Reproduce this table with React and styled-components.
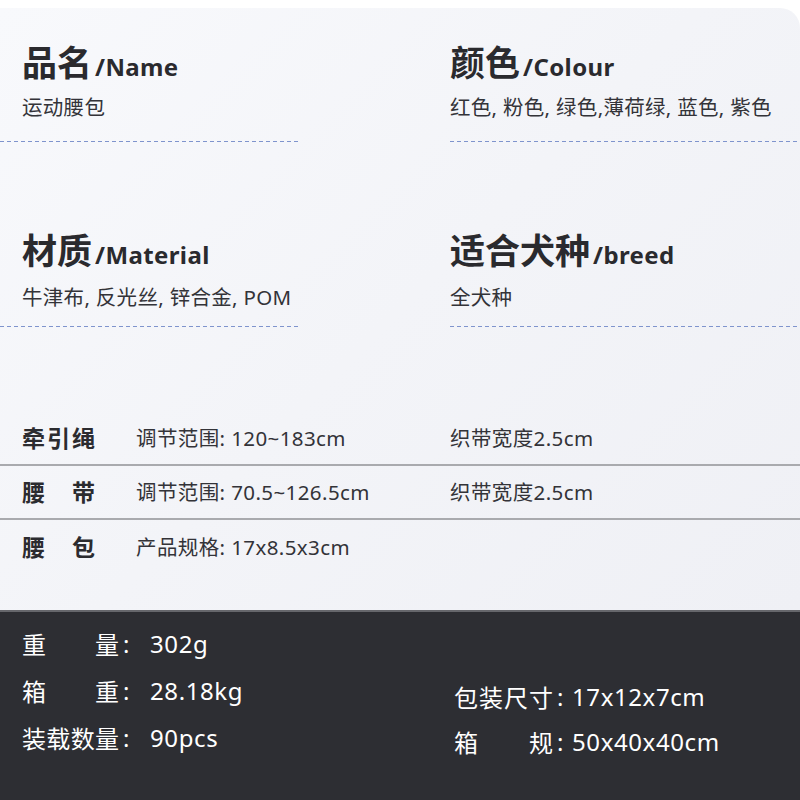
import React from "react";
import styled, { createGlobalStyle } from "styled-components";

const GlobalStyle = createGlobalStyle`
  html, body {
    margin: 0;
    padding: 0;
    background: #ffffff;
  }
  body {
    font-family: "Noto Sans", "Noto Sans CJK SC", sans-serif;
    color: #2b2b2f;
  }
`;

const Page = styled.div`
  width: 800px;
  height: 800px;
  overflow: hidden;
  display: flex;
  flex-direction: column;
  padding-top: 8px;
  box-sizing: border-box;
`;

const Panel = styled.section`
  flex: 1;
  display: flex;
  flex-direction: column;
  background: linear-gradient(135deg, #f8f9fc 0%, #f3f4f8 50%, #eff0f5 100%);
  border-top-right-radius: 20px;
`;

const InfoGrid = styled.div`
  display: grid;
  grid-template-columns: 450px 350px;
  padding-top: 35px;
  row-gap: 89px;
`;

const InfoCell = styled.div`
  display: flex;
  flex-direction: column;
`;

const Heading = styled.h2`
  margin: 0;
  padding-left: ${(p) => p.$indent}px;
  line-height: 40px;
  font-size: 35px;
  font-weight: 700;
  color: #2a2a2e;
  white-space: nowrap;

  small {
    font-size: 24px;
    font-weight: 700;
    margin-left: 3px;
    letter-spacing: 0.4px;
  }
`;

const SubText = styled.p`
  margin: ${(p) => p.$gap}px 0 0;
  padding-left: ${(p) => p.$indent}px;
  line-height: 28px;
  font-size: 20.5px;
  letter-spacing: 0.3px;
  color: #333338;
  white-space: nowrap;
`;

const Dashed = styled.div`
  margin-top: ${(p) => p.$gap}px;
  width: ${(p) => p.$width}px;
  height: 1px;
  background-image: repeating-linear-gradient(
    to right,
    #7f94cd 0 4px,
    transparent 4px 7px
  );
`;

const Table = styled.div`
  margin-top: 85px;
  display: flex;
  flex-direction: column;
`;

const Row = styled.div`
  display: grid;
  grid-template-columns: 114px 314px 1fr;
  align-items: center;
  height: 54px;
  padding-left: 22px;
  padding-bottom: 2px;
  box-sizing: border-box;
  border-bottom: ${(p) => (p.$last ? "none" : "2px solid #a9aaae")};
`;

const Spread = styled.span`
  display: flex;
  justify-content: space-between;
  width: ${(p) => p.$width}px;
  font-size: ${(p) => p.$size}px;
  font-weight: ${(p) => p.$weight || 400};
`;

const Cell = styled.span`
  font-size: 20.5px;
  letter-spacing: 0.4px;
  color: #333338;
  white-space: nowrap;
`;

const Footer = styled.footer`
  height: 190px;
  background: #2d2e33;
  border-top: 2px solid #66676c;
  box-sizing: border-box;
  display: grid;
  grid-template-columns: 454px 1fr;
  color: #ffffff;
`;

const FooterCol = styled.div`
  display: flex;
  flex-direction: column;
  padding-top: ${(p) => p.$top}px;
  padding-left: ${(p) => p.$left}px;
`;

const SpecLine = styled.div`
  display: flex;
  align-items: center;
  height: ${(p) => p.$h}px;
  font-size: 24px;
  white-space: nowrap;
`;

const Colon = styled.span`
  margin-left: 4px;
  width: ${(p) => p.$width}px;
`;

const SpecValue = styled.span`
  letter-spacing: 0.6px;
`;

const split = (text) =>
  [...text].map((ch, i) => <span key={i}>{ch}</span>);

const info = [
  { cn: "品名", en: "/Name", value: "运动腰包" },
  { cn: "颜色", en: "/Colour", value: "红色, 粉色, 绿色,薄荷绿, 蓝色, 紫色" },
  { cn: "材质", en: "/Material", value: "牛津布, 反光丝, 锌合金, POM" },
  { cn: "适合犬种", en: "/breed", value: "全犬种" },
];

const rows = [
  { label: "牵引绳", range: "调节范围: 120~183cm", width: "织带宽度2.5cm" },
  { label: "腰带", range: "调节范围: 70.5~126.5cm", width: "织带宽度2.5cm" },
  { label: "腰包", range: "产品规格: 17x8.5x3cm", width: "" },
];

const leftSpecs = [
  { label: "重量", value: "302g" },
  { label: "箱重", value: "28.18kg" },
  { label: "装载数量", value: "90pcs" },
];

const rightSpecs = [
  { label: "包装尺寸", value: "17x12x7cm" },
  { label: "箱规", value: "50x40x40cm" },
];

export default function App() {
  return (
    <>
      <GlobalStyle />
      <Page>
        <Panel>
          <InfoGrid>
            {info.map((item, i) => {
              const left = i % 2 === 0;
              const second = i > 1;
              return (
                <InfoCell key={item.cn}>
                  <Heading $indent={left ? 22 : 0}>
                    {item.cn}
                    <small>{item.en}</small>
                  </Heading>
                  <SubText $indent={left ? 22 : 0} $gap={second ? 8 : 6}>
                    {item.value}
                  </SubText>
                  <Dashed $width={left ? 300 : 350} $gap={second ? 15 : 20} />
                </InfoCell>
              );
            })}
          </InfoGrid>

          <Table>
            {rows.map((r, i) => (
              <Row key={r.label} $last={i === rows.length - 1}>
                <Spread $width={73} $size={23} $weight={700}>
                  {split(r.label)}
                </Spread>
                <Cell>{r.range}</Cell>
                <Cell>{r.width}</Cell>
              </Row>
            ))}
          </Table>
        </Panel>

        <Footer>
          <FooterCol $top={8} $left={22}>
            {leftSpecs.map((s) => (
              <SpecLine key={s.label} $h={47}>
                <Spread $width={97} $size={24}>
                  {split(s.label)}
                </Spread>
                <Colon $width={27}>:</Colon>
                <SpecValue>{s.value}</SpecValue>
              </SpecLine>
            ))}
          </FooterCol>
          <FooterCol $top={62} $left={0}>
            {rightSpecs.map((s) => (
              <SpecLine key={s.label} $h={45}>
                <Spread $width={99} $size={24}>
                  {split(s.label)}
                </Spread>
                <Colon $width={15}>:</Colon>
                <SpecValue>{s.value}</SpecValue>
              </SpecLine>
            ))}
          </FooterCol>
        </Footer>
      </Page>
    </>
  );
}
